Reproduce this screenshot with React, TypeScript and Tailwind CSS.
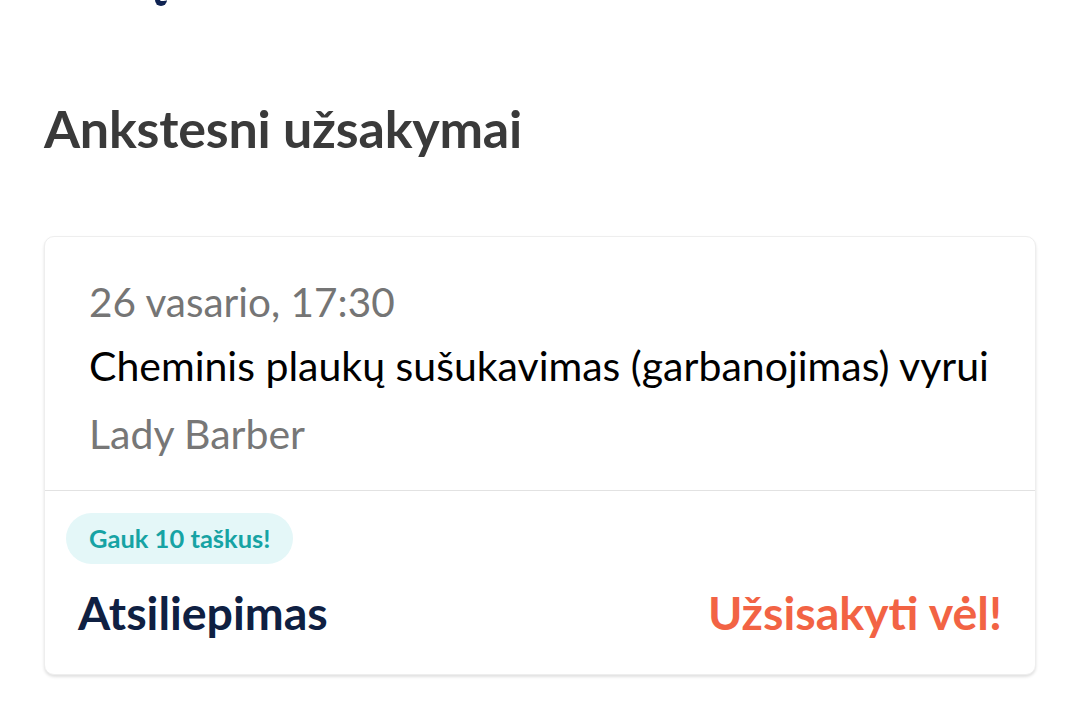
import React from "react";

const font = { fontFamily: "Lato, 'Noto Sans', sans-serif" };

export default function App() {
  return (
    <div className="relative h-[715px] w-[1080px] overflow-hidden bg-white" style={font}>
      {/* clipped descender of the previous section */}
      <div className="absolute left-[155px] top-[-14px] h-[20px] w-[12px] rounded-b-full border-b-[5px] border-l-[5px] border-[#0f2352]" />

      <div className="px-11 pt-[96px]">
        <h2 className="text-[52px] font-bold leading-[64px] tracking-[-0.2px] text-[#3a3a3a]">
          Ankstesni užsakymai
        </h2>

        <div className="mt-[76px] rounded-[10px] border border-[#eeeeee] bg-white shadow-[0_2px_3px_rgba(0,0,0,0.12)]">
          <div className="flex flex-col px-11 pb-[30px] pt-[39px]">
            <p className="text-[40.5px] leading-[52px] text-[#757575]">26 vasario, 17:30</p>
            <p className="mt-[12px] text-[41px] leading-[52px] text-black">
              Cheminis plaukų sušukavimas (garbanojimas) vyrui
            </p>
            <p className="mt-[16px] text-[41px] leading-[52px] text-[#777777]">Lady Barber</p>
          </div>
          <div className="border-t border-[#e2e2e2] px-[21px] pb-[32px] pt-[22px]">
            <span className="inline-flex h-[51px] items-center rounded-full bg-[#e4f7f8] px-[23px] text-[25.5px] font-bold text-[#16a3a4]">
              Gauk 10 taškus!
            </span>
            <div className="mt-[18px] flex items-center justify-between px-[12px]">
              <span className="text-[46.5px] font-bold leading-[60px] text-[#0f2042]">Atsiliepimas</span>
              <span className="text-[46.5px] font-bold leading-[60px] text-[#f26344]">Užsisakyti vėl!</span>
            </div>
          </div>
        </div>
      </div>
    </div>
  );
}
